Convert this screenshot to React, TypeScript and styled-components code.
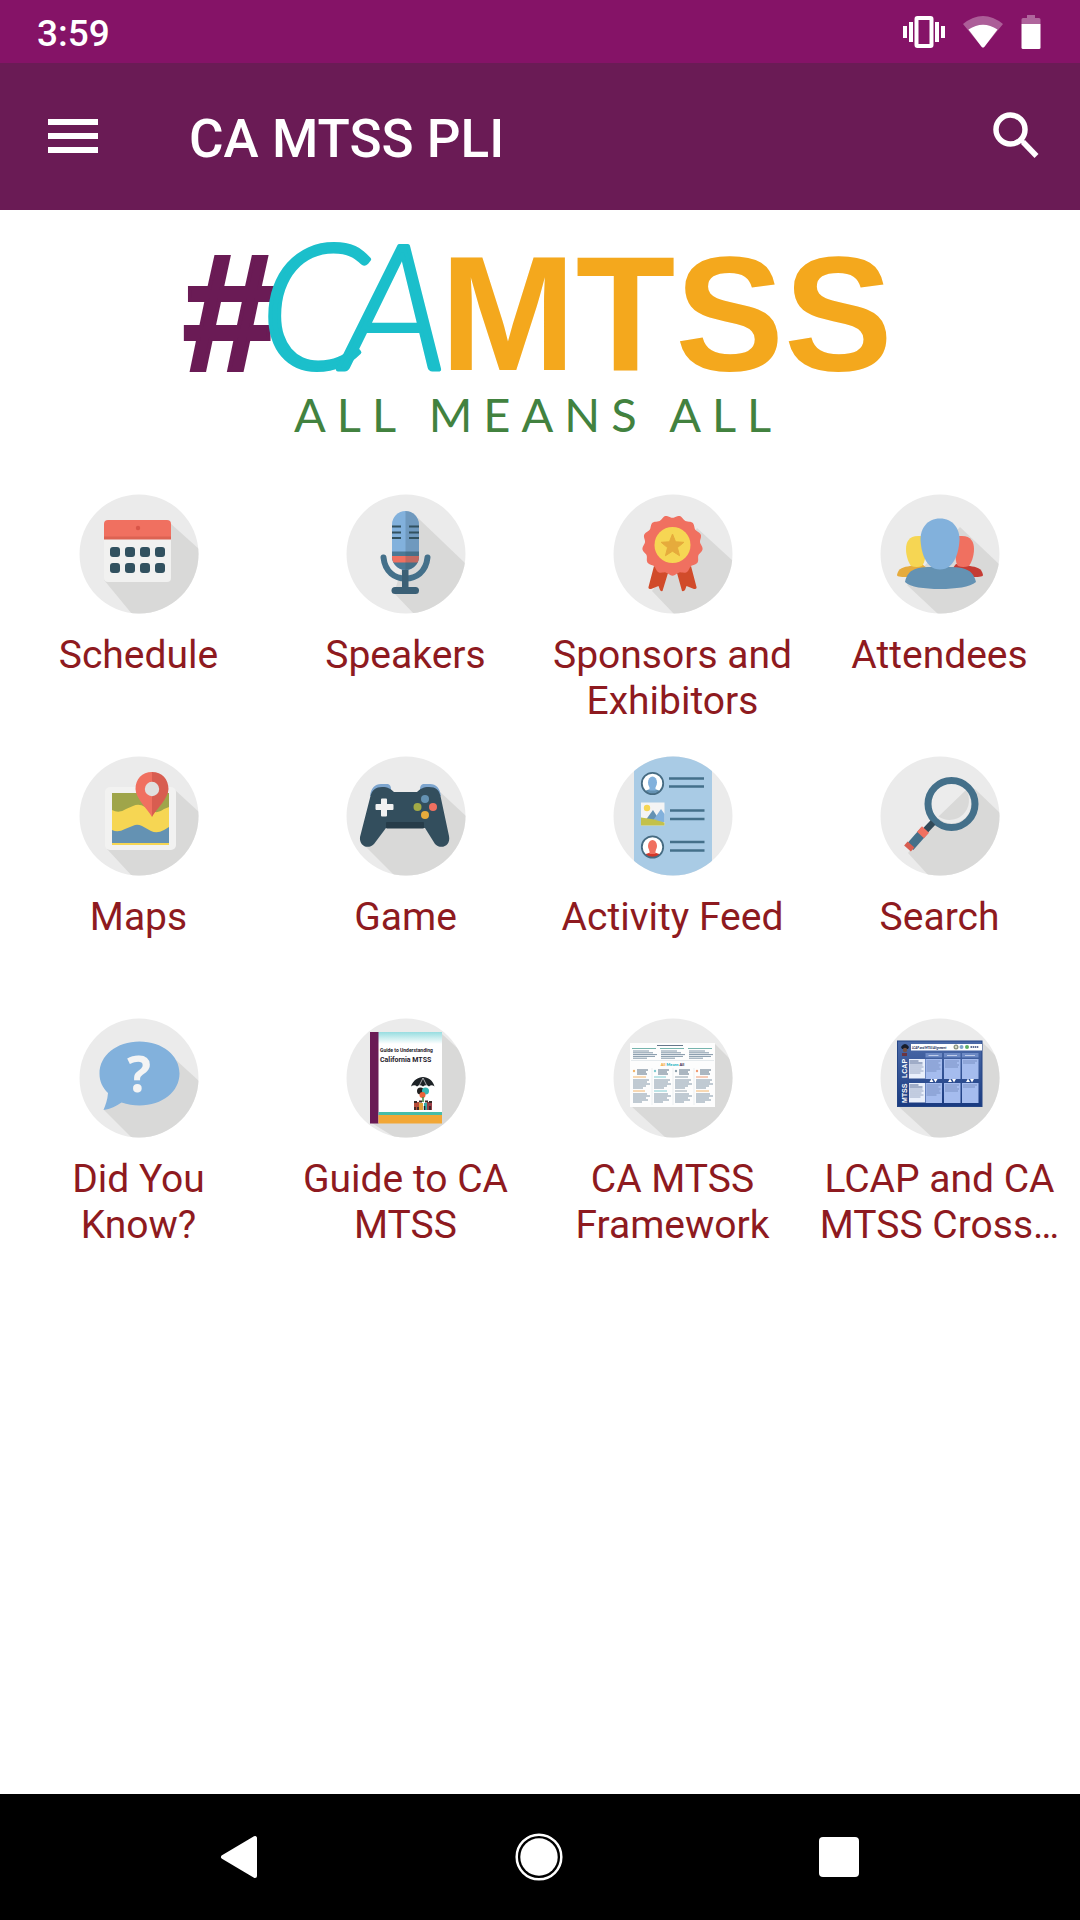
import React from "react";
import styled, { createGlobalStyle } from "styled-components";

const GlobalStyle = createGlobalStyle`
  *, *::before, *::after { box-sizing: border-box; }
  body { margin: 0; background: #fff; font-family: Roboto, "Liberation Sans", sans-serif; }
`;

const Screen = styled.div`
  display: flex;
  flex-direction: column;
  min-height: 100vh;
  background: #fff;
`;

const StatusBar = styled.div`
  display: flex;
  align-items: center;
  justify-content: space-between;
  height: 63px;
  padding: 0 39px 0 37px;
  background: #851367;
  color: #fff;
`;

const Clock = styled.time`
  font-size: 37px;
  font-weight: 500;
  line-height: 44px;
  padding-top: 4px;
`;

const StatusIcons = styled.div`
  display: flex;
  align-items: center;
  gap: 18px;
  svg { display: block; }
`;

const AppBar = styled.header`
  display: flex;
  align-items: center;
  gap: 91px;
  height: 147px;
  padding: 0 41px 0 48px;
  background: #6a1b55;
  color: #fff;
`;

const BarButton = styled.button<{ $end?: boolean }>`
  display: block;
  padding: 0;
  border: 0;
  background: none;
  color: inherit;
  cursor: pointer;
  margin-left: ${(p) => (p.$end ? "auto" : "0")};
  svg { display: block; }
`;

const Title = styled.h1`
  margin: 0;
  padding-top: 4px;
  font-size: 53px;
  font-weight: 500;
  line-height: 62px;
`;

const Main = styled.main`
  flex: 1;
`;

const Banner = styled.svg`
  display: block;
  width: 100%;
  height: auto;
  overflow: visible;
`;

const TileGrid = styled.nav`
  display: grid;
  grid-template-columns: repeat(4, 1fr);
  row-gap: 32px;
  padding: 44px 7px 44px 5px;
`;

const Tile = styled.a`
  display: flex;
  flex-direction: column;
  align-items: center;
  gap: 18px;
  padding: 0 12px;
  color: #8e1a20;
  text-decoration: none;
`;

const TileLabel = styled.span`
  min-height: 92px;
  font-size: 39px;
  line-height: 46px;
  text-align: center;
`;

const NavBar = styled.footer`
  display: flex;
  height: 126px;
  padding: 0 91px 0 89px;
  background: #000;
`;

const NavButton = styled.button`
  display: flex;
  flex: 1;
  align-items: center;
  justify-content: center;
  padding: 0;
  border: 0;
  background: none;
  cursor: pointer;
`;

const GREY = "#ebebeb";
const SHADE = "#d9d9d8";
const BLUE = "#82b1dc";
const STEEL = "#6492b3";
const TEAL = "#44708a";
const DARK = "#31515f";
const RED = "#f07060";
const YELLOW = "#f6d653";
const GOLD = "#e6ab3c";

type BadgeProps = { id: string; shade?: string; children: React.ReactNode };

function Badge({ id, shade, children }: BadgeProps) {
  return (
    <svg width="120" height="120" viewBox="0 0 120 120" aria-hidden="true">
      <clipPath id={id}>
        <circle cx="60" cy="60" r="59.5" />
      </clipPath>
      <g clipPath={`url(#${id})`}>
        <rect width="120" height="120" fill={GREY} />
        {shade && <polygon points={shade} fill={SHADE} />}
        {children}
      </g>
    </svg>
  );
}

function ScheduleIcon() {
  return (
    <Badge id="b-schedule" shade="91,29 120,55 120,120 53,120 25,86">
      <rect x="25" y="26" width="67" height="62" rx="4" fill="#f1f1f0" />
      <path d="M25 45V30a4 4 0 0 1 4-4h59a4 4 0 0 1 4 4v15z" fill={RED} />
      <rect x="25" y="42.500" width="67" height="3" fill="#dc6353" />
      <circle cx="59" cy="34" r="2.200" fill="#d95548" />
      {[53, 69].map((y) =>
        [31, 46, 61, 76].map((x) => (
          <rect key={`${x}-${y}`} x={x} y={y} width="10" height="10" rx="3" fill={DARK} />
        ))
      )}
    </Badge>
  );
}

function SpeakersIcon() {
  return (
    <Badge id="b-speakers" shade="72,24 120,70 120,120 68,120 48,99">
      <clipPath id="mic">
        <rect x="46" y="17" width="27" height="59" rx="13.500" />
      </clipPath>
      <path d="M37.500 63.500C39 78 49 84.500 59.500 84.500S80 78 81.500 63.500" fill="none" stroke={TEAL} strokeWidth="6" strokeLinecap="round" />
      <rect x="56" y="74" width="6.500" height="22" fill="#3b6076" />
      <rect x="45.500" y="93" width="27.500" height="7" rx="3.500" fill="#3b6076" />
      <g clipPath="url(#mic)">
        <rect x="46" y="17" width="27" height="59" fill={BLUE} />
        <rect x="46" y="57.500" width="27" height="20" fill="#4b7995" />
        <rect x="46" y="62" width="27" height="6.500" fill={RED} />
        <rect x="59.500" y="17" width="14" height="59" fill="#31515f" fillOpacity=".24" />
        <path d="M46 32.500h9M46 38.500h9M46 44h9M63 32.500h10M63 38.500h10M63 44h10" stroke={DARK} strokeWidth="2.200" />
      </g>
    </Badge>
  );
}

function radial(count: number, radius: (i: number) => number, cx: number, cy: number) {
  return Array.from({ length: count }, (_, i) => {
    const a = Math.PI / 2 + (i * 2 * Math.PI) / count;
    const r = radius(i);
    return `${(cx + r * Math.cos(a)).toFixed(2)},${(cy + r * Math.sin(a)).toFixed(2)}`;
  }).join(" ");
}

const rosette = radial(156, (i) => 29 + 1.3 * Math.cos((i * 26 * Math.PI) / 156), 59.5, 51.5);
const star = radial(10, (i) => (i % 2 ? 12 : 5.2), 59.5, 52);

function SponsorsIcon() {
  return (
    <Badge id="b-sponsors" shade="84,34 120,67 120,120 61,120 39,97">
      <path d="M41 72l14 7-5.500 18q-2 .5-2.500-1l-1.500-4-7.500 3q-3 0-2.500-2zM78 72l-14 7 5 18q2 .5 3-1l1.500-4 7.500 3q3 0 2.500-2z" fill="#d14b2a" />
      <polygon points={rosette} fill={RED} />
      <circle cx="59.500" cy="51" r="18" fill={YELLOW} />
      <polygon points={star} fill={GOLD} stroke={GOLD} strokeWidth="1" strokeLinejoin="round" />
    </Badge>
  );
}

function AttendeesIcon() {
  return (
    <Badge id="b-attendees" shade="80,33 120,71 120,120 58,120 27,91">
      <path d="M17 81c1-7 7-8 13-9l12-2 6 5-20 8c-5 0-11 0-11-2z" fill={GOLD} />
      <path d="M103 81c-1-7-7-8-13-9l-14-2-4 5 20 8c5 0 11 0 11-2z" fill="#c53c34" />
      <path d="M38 42c-9 0-12 6-12 13 0 8 3 14 5 17q6 2 11 0c3-3 5-14 4-30z" fill={YELLOW} />
      <path d="M82 42c9 0 12 6 12 13 0 8-3 14-5 17q-6 2-11 0c-3-3-3-14-2-30z" fill={RED} />
      <path d="M25 88c3-14 13-14 22-15h26c9 1 20 1 23 15-6 5-20 7-36 7s-30-2-35-7z" fill={STEEL} />
      <path d="M60 24.500c-13 0-19.500 10-19.500 21C41 57 45 75.500 60 75.500S79 57 79.500 45.500c0-11-6.500-21-19.500-21z" fill={BLUE} />
    </Badge>
  );
}

function MapsIcon() {
  return (
    <Badge id="b-maps" shade="96,34 120,56 120,120 53,120 28,93">
      <rect x="26" y="31" width="71" height="63" rx="5" fill="#f2f2f1" />
      <rect x="33" y="37" width="57" height="50" fill="#9fa54a" />
      <path d="M33 54q7 4 14-1l7-3q6-3 12 1l7 4q6 3 12-2l5-2v38H33z" fill={YELLOW} />
      <path d="M33 74q6 3 13-1l10-4q3-1 7 1l9 5q6 3 13-1l5-3v16H33z" fill={STEEL} />
      <path d="M73 16c-10 0-16.500 7-16.500 17 0 9 12 20 16.500 28z" fill={RED} />
      <path d="M73 16c10 0 16.500 7 16.500 17 0 9-12 20-16.500 28z" fill="#d85d50" />
      <circle cx="73" cy="33" r="7.200" fill="#e0e0de" />
    </Badge>
  );
}

function GameIcon() {
  return (
    <Badge id="b-game" shade="92,34 120,60 120,120 49,120 18,89">
      <path d="M24 40c1-8 5-12 11-12h7q3 1 3 5l-6 7zM95 40c-1-8-5-12-11-12h-7q-3 1-3 5l6 7z" fill="#7da5ce" />
      <path d="M48 36h23c3-3 6-5 12-5 7 0 10 3 11.500 9l8.500 40c2 10-8 14-14 8L79 72H40L28 88c-6 6-15 2-14-7l10.500-41C26 34 30 31 36 31s9 2 12 5z" fill="#334e5d" />
      <rect x="40" y="66" width="38" height="6.500" rx="1" fill="#263c49" />
      <path d="M35 43.500q0-1 1-1h4q1 0 1 1V48h5.500q1 0 1 1v4q0 1-1 1H41v5.500q0 1-1 1h-4q-1 0-1-1V54h-4.500q-1 0-1-1v-4q0-1 1-1H35z" fill="#f1f1f1" />
      <circle cx="79" cy="43" r="4" fill={STEEL} />
      <circle cx="71.500" cy="51" r="4" fill="#a3ab46" />
      <circle cx="87" cy="51" r="4" fill={RED} />
      <circle cx="79" cy="59" r="4" fill={GOLD} />
    </Badge>
  );
}

function Avatar({ y, head, body }: { y: number; head: string; body: string }) {
  const id = `avatar-${y}`;
  return (
    <g>
      <clipPath id={id}>
        <circle cx="39.500" cy={y} r="10.500" />
      </clipPath>
      <circle cx="39.500" cy={y} r="10.500" fill="#fff" />
      <g clipPath={`url(#${id})`}>
        <ellipse cx="39.500" cy={y + 11} rx="9.500" ry="5.500" fill={body} />
        <ellipse cx="39.500" cy={y - 1} rx="4.500" ry="6" fill={head} />
        <rect x="36.500" y={y} width="6" height="7" fill={head} />
      </g>
      <circle cx="39.500" cy={y} r="10.700" fill="none" stroke="#466b82" strokeWidth="1.800" />
    </g>
  );
}

function FeedIcon() {
  return (
    <Badge id="b-feed">
      <rect x="21" y="0" width="78" height="120" fill="#a9cbe5" />
      <Avatar y={27.5} head={BLUE} body={STEEL} />
      <Avatar y={91} head={RED} body="#d3382a" />
      <rect x="28" y="46.500" width="23.500" height="23" fill="#f4f4f4" />
      <circle cx="34" cy="52" r="3.200" fill={YELLOW} />
      <path d="M32 65l8-11 7 11z" fill={STEEL} />
      <path d="M39 66l9-13 3.500 5v8z" fill={BLUE} />
      <path d="M28 61.500q12 1 23.500 5v3H28z" fill="#c3c14b" />
      <path d="M56 22.500h35M56 30.500h35M57 54.500h34.500M57 63h34.500M57 86h34.500M57 94.500h34.500" stroke={TEAL} strokeWidth="2.500" />
    </Badge>
  );
}

function SearchBadgeIcon() {
  return (
    <Badge id="b-search" shade="28,97 45,74 88,35 95,33 120,57 120,120 49,120">
      <circle cx="71.500" cy="48" r="19.500" fill="#ececec" />
      <path d="M58.500 60.500L86 34a19.500 19.500 0 0 1-27.500 26.500z" fill={SHADE} />
      <circle cx="71.500" cy="48" r="23.500" fill="none" stroke={TEAL} strokeWidth="7" />
      <path d="M53 66.500L44 76" stroke="#314a59" strokeWidth="6.500" />
      <path d="M30 91l14.500-16.500" stroke={TEAL} strokeWidth="9" />
      <path d="M45.500 73.500l-5 5.500" stroke={RED} strokeWidth="9.500" />
      <path d="M31 88.500l-3.500 4" stroke="#d85d50" strokeWidth="9" />
    </Badge>
  );
}

function QuestionIcon() {
  return (
    <Badge id="b-question" shade="97,42 120,63 120,120 53,120 25,92">
      <path d="M60.500 23.500c-23 0-40 14-40 32 0 8 3 14 8.500 19.500-.5 7-2.500 12-4.500 17 7-1 13-4 18-7.500 6 2 12 3 18 3 23 0 40-14 40-32s-17-32-40-32z" fill={BLUE} />
      <text x="60" y="74" textAnchor="middle" fontFamily="'Noto Sans', sans-serif" fontWeight="700" fontSize="50" fill="#f4f4f4">?</text>
    </Badge>
  );
}

function GuideIcon() {
  return (
    <Badge id="b-guide" shade="96,16 120,38 120,120 50,120 24,104">
      <linearGradient id="cover" x1="0" y1="0" x2="0" y2="1">
        <stop offset="0" stopColor="#97dde0" />
        <stop offset="1" stopColor="#fff" />
      </linearGradient>
      <rect x="24" y="14" width="72" height="91" fill="#fff" />
      <rect x="32" y="14" width="64" height="12" fill="url(#cover)" />
      <rect x="24" y="14" width="8.500" height="91.500" fill="#6a1b55" />
      <rect x="32.500" y="94" width="63.500" height="3" fill="#47bda9" />
      <rect x="32.500" y="97" width="63.500" height="8.500" fill="#f2a736" />
      <g fill="#26222b" fontFamily="Roboto, sans-serif" fontWeight="700">
        <text x="34" y="34" fontSize="5">Guide to Understanding</text>
        <text x="34" y="44" fontSize="7">California MTSS</text>
      </g>
      <path d="M65 68.500c2-6 7-9.500 12-9.500s10 3.500 11.500 9.500q-3-2.500-5.500 0-3-2.500-6 0-3-2.500-6 0-2.500-2.500-6 0z" fill="#1d2226" />
      <path d="M73 68l4-8 4 8" fill="none" stroke="#fff" strokeWidth=".6" />
      <circle cx="74.500" cy="73" r="3.500" fill="#222" />
      <circle cx="79.500" cy="73" r="3.500" fill="#35b7b5" />
      <circle cx="76.500" cy="77" r="3" fill="#e9633a" />
      <path d="M77 79v5" stroke="#458e4a" strokeWidth="1.600" />
      <g>
        <path d="M68 84h5v8h-5z" fill="#b64c39" />
        <path d="M73 85h4v7h-4z" fill="#e2a13b" />
        <path d="M78 85h3v7h-3z" fill="#36a7a6" />
        <path d="M81 84h5v8h-5z" fill="#983e46" />
        <path d="M69 89v3M72 89v3M78.500 88v4M84 88v4" stroke="#222" strokeWidth="1.500" />
        <path d="M68 84h3M73 83.500h3M79 83.500h3M83 84h3" stroke="#3a2b28" strokeWidth="2" />
      </g>
    </Badge>
  );
}

function MiniLines({ x, y, widths, step = 2, color = "#8397a8" }: { x: number; y: number; widths: number[]; step?: number; color?: string }) {
  return (
    <path
      d={widths.map((w, i) => `M${x} ${y + i * step}h${w}`).join("")}
      stroke={color}
      strokeWidth="1"
      fill="none"
    />
  );
}

function FrameworkIcon() {
  const accents = ["#f2b46a", "#7fcbd0", "#8fa1ad", "#ef9a72"];
  const lower = ["#f2b46a", "#7fcbd0", "#9aa7b0", "#f2b46a"];
  return (
    <Badge id="b-framework" shade="102,26 120,44 120,120 53,120 18,88">
      <rect x="17" y="25" width="85" height="64" fill="#fdfdfd" />
      <MiniLines x={44} y={27.5} widths={[26]} color="#66788a" />
      {[19, 47, 75].map((x) => (
        <g key={x}>
          <MiniLines x={x} y={30.5} widths={[24]} color="#76b4ad" />
          <MiniLines x={x + 1} y={33} widths={[16, 20, 24, 22, 14]} step={1.8} />
        </g>
      ))}
      <path d="M18 42.500h83" stroke="#d5dde2" strokeWidth=".6" />
      <text x="59.500" y="47.500" textAnchor="middle" fontFamily="Lato, sans-serif" fontWeight="900" fontSize="4">
        <tspan fill="#f3a233">All </tspan>
        <tspan fill="#27b2c2">Means </tspan>
        <tspan fill="#3d2b55">All</tspan>
      </text>
      {[19, 40, 61, 82].map((x, i) => (
        <g key={x}>
          <circle cx={x + 2} cy="53" r="1.200" fill={accents[i]} />
          <MiniLines x={x + 5} y={52} widths={[11, 9, 10]} color="#5b7184" />
          <MiniLines x={x + 1} y={59} widths={[13 - (i % 2)]} color={accents[i]} />
          <MiniLines x={x + 1} y={62} widths={[16, 14, 17, 13, 10]} />
          <MiniLines x={x + 1} y={73} widths={[12 + (i % 2)]} color={lower[i]} />
          <MiniLines x={x + 1} y={76} widths={[14, 17, 13, 15, 9]} />
          {i > 0 && <path d={`M${x - 1} 50v37`} stroke="#dbe2e6" strokeWidth=".5" />}
        </g>
      ))}
    </Badge>
  );
}

function LcapIcon() {
  return (
    <Badge id="b-lcap" shade="102,24 120,42 120,120 53,120 18,88">
      <linearGradient id="poster" x1="0" y1="0" x2="0" y2="1">
        <stop offset="0" stopColor="#4c6ba9" />
        <stop offset="1" stopColor="#193a80" />
      </linearGradient>
      <rect x="17.500" y="23" width="84.500" height="65.500" fill="url(#poster)" stroke="#244585" strokeWidth="1" />
      <rect x="31" y="26" width="71" height="6.500" fill="#fff" />
      <text x="32" y="30.500" fontFamily="Lato, sans-serif" fontWeight="900" fontStyle="italic" fontSize="3" fill="#22305a">LCAP and MTSS Alignment</text>
      <circle cx="76" cy="29" r="2.500" fill="#8c9282" />
      <circle cx="76" cy="29" r="1.200" fill="#d9dfc8" />
      <circle cx="81.500" cy="29" r="2" fill="#7ea5cb" />
      <circle cx="87" cy="29" r="2" fill="#5eaf64" />
      <path d="M90.500 29h8" stroke="#5d6d95" strokeWidth="2" strokeDasharray="1.500 .6" />
      <path d="M21 29q4-6 8 0l-1 2h-6z" fill="#161b29" />
      <circle cx="25" cy="32" r="2.200" fill="#755243" />
      <path d="M22 35h5v3h-5z" fill="#6b3542" />
      <g fill="#fff" fontFamily="'Liberation Sans', sans-serif" fontWeight="700" fontSize="7">
        <text transform="translate(27 60) rotate(-90)">LCAP</text>
        <text transform="translate(27 85) rotate(-90)">MTSS</text>
      </g>
      {[41, 65].map((y) => (
        <g key={y}>
          <rect x="29" y={y} width="16" height="19.500" fill="#e9effb" />
          <MiniLines x={29.5} y={y + 2} widths={[9, 13]} color="#576b93" />
          <MiniLines x={29.5} y={y + 6} widths={[13, 14, 12, 14, 11]} color="#9aa8c4" />
          {[45.5, 64, 82].map((x, i) => (
            <g key={x}>
              <rect x={x} y={y} width="16.500" height="20" fill="#a5bcee" />
              <MiniLines x={x + 1} y={y + 2} widths={[14, 12, 14, 13, 14, 10].slice(0, 6 - i * 2)} color="#7b91c4" />
            </g>
          ))}
        </g>
      ))}
      {[45.5, 64, 82].map((x) => (
        <g key={x}>
          <rect x={x} y="35" width="16.500" height="4.500" fill="#6d8ac5" />
          <path d={`M${x + 3} 37.500h10`} stroke="#bfcdea" strokeWidth="1" />
          <path d={`M${x + 4} 64l2-3.500 2 3.500zM${x + 8} 61h4l-2 3.500z`} fill="#fff" />
        </g>
      ))}
    </Badge>
  );
}

const tiles: { label: string; href: string; Icon: () => React.JSX.Element }[] = [
  { label: "Schedule", href: "#schedule", Icon: ScheduleIcon },
  { label: "Speakers", href: "#speakers", Icon: SpeakersIcon },
  { label: "Sponsors and Exhibitors", href: "#sponsors", Icon: SponsorsIcon },
  { label: "Attendees", href: "#attendees", Icon: AttendeesIcon },
  { label: "Maps", href: "#maps", Icon: MapsIcon },
  { label: "Game", href: "#game", Icon: GameIcon },
  { label: "Activity Feed", href: "#feed", Icon: FeedIcon },
  { label: "Search", href: "#search", Icon: SearchBadgeIcon },
  { label: "Did You Know?", href: "#did-you-know", Icon: QuestionIcon },
  { label: "Guide to CA MTSS", href: "#guide", Icon: GuideIcon },
  { label: "CA MTSS Framework", href: "#framework", Icon: FrameworkIcon },
  { label: "LCAP and CA MTSS Cross…", href: "#lcap", Icon: LcapIcon },
];

function CamtssBanner() {
  return (
    <Banner viewBox="0 0 1080 240" role="img" aria-label="#CAMTSS All Means All">
      <text x="183" y="160" fontFamily="'Liberation Sans', sans-serif" fontWeight="700" fontSize="166" fill="#6a1b55" stroke="#6a1b55" strokeWidth="4">#</text>
      <g fontFamily="Lato, sans-serif" fontStyle="italic" fontWeight="300" fontSize="174" fill="#1bbfcb" stroke="#1bbfcb" strokeWidth="4" strokeLinejoin="round">
        <text x="260" y="159">C</text>
        <text x="342" y="159">A</text>
      </g>
      <text x="440" y="160" fontFamily="'Liberation Sans', sans-serif" fontWeight="700" fontSize="163" fill="#f4a81d">MTSS</text>
      <text x="294" y="222" fontFamily="Lato, sans-serif" fontSize="47" letterSpacing="11" fill="#42823f">ALL MEANS ALL</text>
    </Banner>
  );
}

export default function App() {
  return (
    <Screen>
      <GlobalStyle />
      <StatusBar>
        <Clock>3:59</Clock>
        <StatusIcons>
          <svg width="42" height="32" viewBox="0 0 42 32" aria-label="Vibrate" role="img">
            <path d="M0 10h4v12H0zM6 6h4v20H6zM32 6h4v20h-4zM38 10h4v12h-4z" fill="#fff" />
            <rect x="13.500" y="2" width="15" height="28" rx="1" fill="none" stroke="#fff" strokeWidth="4" />
          </svg>
          <svg width="40" height="32" viewBox="0 0 40 32" aria-label="Wi-Fi" role="img">
            <path d="M0 8Q20-8 40 8L22 30q-2 3-4 0z" fill="#fff" fillOpacity=".32" />
            <path d="M5.500 13.500Q20 4 34.500 13.500L22 30q-2 3-4 0z" fill="#fff" />
          </svg>
          <svg width="20" height="34" viewBox="0 0 20 34" aria-label="Battery" role="img">
            <path d="M6 0h8v3h4q1.500 0 1.500 1.500V9H.5V4.500Q.5 3 2 3h4z" fill="#fff" fillOpacity=".35" />
            <path d="M.5 9h19v23.500q0 1.500-1.500 1.500H2q-1.500 0-1.500-1.500z" fill="#fff" />
          </svg>
        </StatusIcons>
      </StatusBar>
      <AppBar>
        <BarButton type="button" aria-label="Open menu">
          <svg width="50" height="36" viewBox="0 0 50 36">
            <path d="M0 0h50v6H0zM0 14h50v6H0zM0 28h50v6H0z" fill="#fff" />
          </svg>
        </BarButton>
        <Title>CA MTSS PLI</Title>
        <BarButton type="button" $end aria-label="Search">
          <svg width="46" height="50" viewBox="0 0 46 50">
            <circle cx="17.500" cy="17.500" r="14.500" fill="none" stroke="#fff" strokeWidth="5.500" />
            <path d="M30 30L43.500 44" stroke="#fff" strokeWidth="5.500" />
            <path d="M27 27l5 5" stroke="#fff" strokeWidth="4" />
          </svg>
        </BarButton>
      </AppBar>
      <Main>
        <CamtssBanner />
        <TileGrid aria-label="Event sections">
          {tiles.map(({ label, href, Icon }) => (
            <Tile key={label} href={href}>
              <Icon />
              <TileLabel>{label}</TileLabel>
            </Tile>
          ))}
        </TileGrid>
      </Main>
      <NavBar>
        <NavButton type="button" aria-label="Back">
          <svg width="38" height="44" viewBox="0 0 38 44">
            <path d="M3 22L35 3v38z" fill="#fff" stroke="#fff" strokeWidth="4" strokeLinejoin="round" />
          </svg>
        </NavButton>
        <NavButton type="button" aria-label="Home">
          <svg width="48" height="48" viewBox="0 0 48 48">
            <circle cx="24" cy="24" r="22.300" fill="none" stroke="#fff" strokeWidth="2.500" />
            <circle cx="24" cy="24" r="18.700" fill="#fff" />
          </svg>
        </NavButton>
        <NavButton type="button" aria-label="Recent apps">
          <svg width="40" height="40" viewBox="0 0 40 40">
            <rect width="40" height="40" rx="4" fill="#fff" />
          </svg>
        </NavButton>
      </NavBar>
    </Screen>
  );
}
